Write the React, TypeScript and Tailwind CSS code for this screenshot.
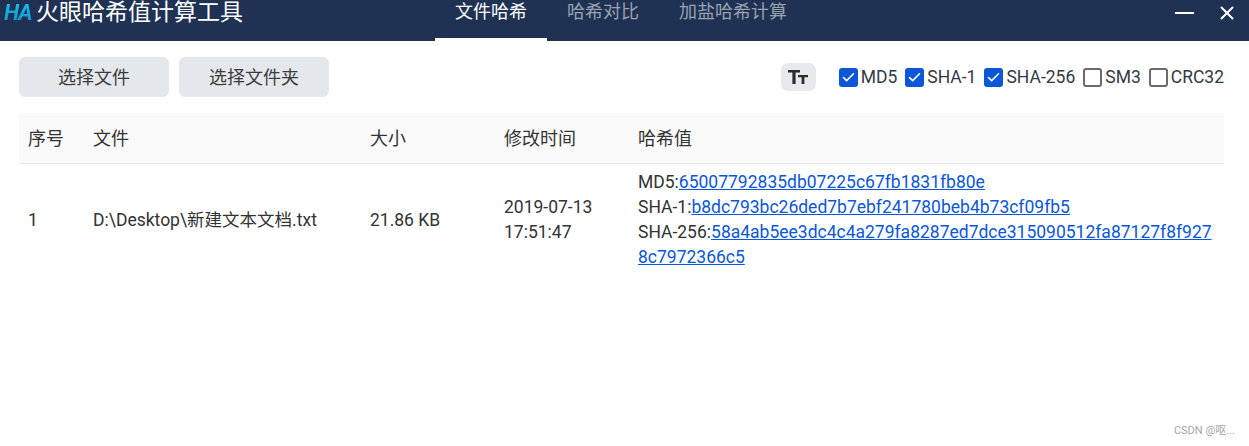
import { Check, X } from 'lucide-react'

const tabs = ['文件哈希', '哈希对比', '加盐哈希计算']

const algos = [
  { name: 'MD5', checked: true },
  { name: 'SHA-1', checked: true },
  { name: 'SHA-256', checked: true },
  { name: 'SM3', checked: false },
  { name: 'CRC32', checked: false },
]

const hashes = [
  { label: 'MD5', value: '65007792835db07225c67fb1831fb80e' },
  { label: 'SHA-1', value: 'b8dc793bc26ded7b7ebf241780beb4b73cf09fb5' },
  { label: 'SHA-256', value: '58a4ab5ee3dc4c4a279fa8287ed7dce315090512fa87127f8f9278c7972366c5' },
]

const font = "font-['Roboto','Noto_Sans_CJK_SC',sans-serif]"

function Header() {
  return (
    <header className="h-[41px] bg-[#1f3253] flex items-start shrink-0 overflow-hidden">
      <div className="w-[435px] flex items-center pl-[4px] h-[25px]">
        <span className="w-[32px] text-[22px] leading-[25px] italic font-bold tracking-[-1px] text-transparent bg-clip-text bg-gradient-to-b from-[#19c4f5] to-[#0f8fc4]">
          HA
        </span>
        <span className="text-white text-[23px] leading-[25px]">火眼哈希值计算工具</span>
      </div>
      <nav className="flex">
        {tabs.map((t, i) => (
          <div
            key={t}
            className={
              i === 0
                ? 'h-[41px] px-5 pt-[-1px] text-white text-[18px] leading-[24px] border-b-[3px] border-white w-[112px] text-center'
                : 'h-[41px] px-5 text-[#98a1b0] text-[18px] leading-[24px]'
            }
          >
            {t}
          </div>
        ))}
      </nav>
      <div className="ml-auto flex items-center h-[25px] pr-[11px]">
        <div className="w-[19px] h-[2px] bg-white mr-[22px]" />
        <X size={22} color="#ffffff" strokeWidth={2.2} />
      </div>
    </header>
  )
}

function Toolbar() {
  return (
    <div className="flex items-center justify-between pl-[19px] pr-[25px] mt-[16px] h-[40px]">
      <div className="flex gap-[10px]">
        <button className="w-[150px] h-[40px] rounded-[6px] bg-[#e4e7eb] text-[#3c3c3c] text-[18px]">选择文件</button>
        <button className="w-[150px] h-[40px] rounded-[6px] bg-[#e4e7eb] text-[#3c3c3c] text-[18px]">选择文件夹</button>
      </div>
      <div className="flex items-center">
        <div className="w-[35px] h-[28px] rounded-[7px] bg-[#e7e9ec] flex items-center justify-center mr-[23px]">
          <svg width="22" height="16" viewBox="0 0 22 16" fill="#2b2b2b">
            <path d="M1 1h12v2.6H8.6V15H5.4V3.6H1z" />
            <path d="M11 6h10v2.2h-3.6V15h-2.8V8.2H11z" />
          </svg>
        </div>
        <div className="flex items-center gap-[8px]">
          {algos.map((a) => (
            <label key={a.name} className="flex items-center gap-[3px] text-[17.5px] text-[#333a45]">
              {a.checked ? (
                <span className="w-[19px] h-[19px] rounded-[3px] bg-[#0b57d8] flex items-center justify-center">
                  <Check size={15} color="#ffffff" strokeWidth={2.6} />
                </span>
              ) : (
                <span className="w-[19px] h-[19px] rounded-[3px] border-2 border-[#6b6b6b] bg-white" />
              )}
              {a.name}
            </label>
          ))}
        </div>
      </div>
    </div>
  )
}

function FileTable() {
  return (
    <div className="mx-[19px] mr-[25px] mt-[16px] text-[#333333]">
      <div className="grid grid-cols-[65px_277px_134px_134px_1fr] h-[51px] items-center bg-[#fafafa] border-b border-[#e8e8e8] text-[18px]">
        <div className="px-[9px]">序号</div>
        <div className="px-[9px]">文件</div>
        <div className="px-[9px]">大小</div>
        <div className="px-[9px]">修改时间</div>
        <div className="px-[9px]">哈希值</div>
      </div>
      <div className="grid grid-cols-[65px_277px_134px_134px_1fr] items-center pt-[6px] text-[17.5px] leading-[25px]">
        <div className="px-[9px]">1</div>
        <div className="px-[9px]">D:\Desktop\新建文本文档.txt</div>
        <div className="px-[9px]">21.86 KB</div>
        <div className="px-[9px]">
          2019-07-13
          <br />
          17:51:47
        </div>
        <div className="px-[9px] break-all">
          {hashes.map((h) => (
            <div key={h.label}>
              {h.label}:
              <a className="text-[#0b57d8] underline">{h.value}</a>
            </div>
          ))}
        </div>
      </div>
    </div>
  )
}

export default function App() {
  return (
    <div className={`relative h-[446px] bg-white flex flex-col overflow-hidden ${font}`}>
      <Header />
      <Toolbar />
      <FileTable />
      <div className="absolute right-[14px] bottom-[7px] text-[11px] text-[#a6a6a6]">CSDN @呕...</div>
    </div>
  )
}
